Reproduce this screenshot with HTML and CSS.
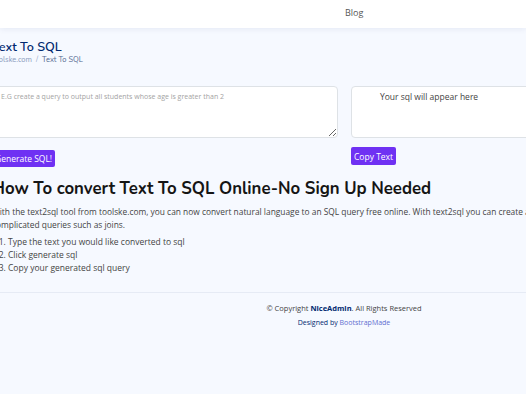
FILE: index.html
```html
<!DOCTYPE html>
<html lang="en">
<head>
<meta charset="utf-8">
<title>Text To SQL</title>
<link rel="stylesheet" href="styles.css">
</head>
<body>
<header class="header">
  <nav class="nav"><a class="nav-link" href="#">Blog</a></nav>
</header>
<main class="main">
  <div class="pagetitle">
    <h1>Text To SQL</h1>
    <div class="breadcrumb"><a href="#">toolske.com</a><span class="sep">/</span><span class="current">Text To SQL</span></div>
  </div>
  <section class="tool">
    <div class="col">
      <textarea class="box" placeholder="E.G create a query to output all students whose age is greater than 2"></textarea>
      <button class="btn btn-gen">Generate SQL!</button>
    </div>
    <div class="col">
      <div class="box output">Your sql will appear here</div>
      <button class="btn btn-copy">Copy Text</button>
    </div>
  </section>
  <section class="about">
    <h2>How To convert Text To SQL Online-No Sign Up Needed</h2>
    <p>With the text2sql tool from toolske.com, you can now convert natural language to an SQL query free online. With text2sql you can create any complicated queries such as joins.</p>
    <ol>
      <li>Type the text you would like converted to sql</li>
      <li>Click generate sql</li>
      <li>Copy your generated sql query</li>
    </ol>
  </section>
</main>
<footer class="footer">
  <div class="copyright">&copy; Copyright <strong>NiceAdmin</strong>. All Rights Reserved</div>
  <div class="credits">Designed by <a href="#">BootstrapMade</a></div>
</footer>
</body>
</html>
```
FILE: styles.css
```css
html, body {
  margin: 0;
  padding: 0;
  overflow: hidden;
}
body {
  background: #f6f9ff;
  font-family: "Open Sans", "Liberation Sans", sans-serif;
  color: #444444;
  width: 526px;
  height: 394px;
}
.header {
  box-sizing: border-box;
  height: 28px;
  background: #fff;
  box-shadow: 0 1px 6px rgba(1, 41, 112, 0.08);
  display: flex;
  align-items: flex-start;
  padding-top: 6px;
}
.nav {
  padding-left: 345px;
  font-size: 9px;
  line-height: 13px;
}
.nav-link {
  color: #555;
  text-decoration: none;
}
.main {
  margin-left: -8px;
  width: 705px;
  padding-top: 10px;
}
.pagetitle h1 {
  margin: 0;
  font-family: "Nunito", "Lato", sans-serif;
  font-weight: 600;
  font-size: 12.6px;
  line-height: 17px;
  color: #012970;
}
.breadcrumb {
  font-size: 7.5px;
  line-height: 10px;
  margin-top: 0;
  font-family: "Nunito", "Lato", sans-serif;
}
.breadcrumb a {
  color: #899bbd;
  text-decoration: none;
}
.breadcrumb .sep {
  color: #899bbd;
  padding: 0 4px;
}
.breadcrumb .current {
  color: #51678f;
}
.tool {
  margin-top: 21px;
  display: grid;
  grid-template-columns: 1fr 1fr;
  column-gap: 13px;
}
.col {
  display: flex;
  flex-direction: column;
  align-items: flex-start;
}
.box {
  box-sizing: border-box;
  width: 100%;
  height: 52px;
  background: #fff;
  border: 1px solid #dee2e6;
  border-radius: 4px;
  margin: 0;
}
textarea.box {
  font-family: "Open Sans", sans-serif;
  font-size: 7px;
  padding: 5px 8px;
  color: #444;
  resize: vertical;
}
textarea.box::placeholder {
  color: #a3a3a3;
}
.output {
  font-size: 8.5px;
  padding: 4px 0 0 28px;
  color: #444;
}
.btn {
  border: none;
  border-radius: 2px;
  background: #6f31f3;
  color: #fff;
  font-family: "Open Sans", sans-serif;
  font-size: 8.5px;
  padding: 0 3px;
  height: 17px;
}
.btn-gen {
  margin-top: 12px;
}
.btn-copy {
  margin-top: 9px;
  height: 18px;
}
.about {
  margin-top: 11px;
}
.about h2 {
  margin: 0;
  font-family: "Nunito", "Lato", sans-serif;
  font-weight: 700;
  font-size: 16.8px;
  line-height: 22px;
  color: #151515;
}
.about p {
  margin: 5px 0 0;
  font-size: 8.4px;
  line-height: 13px;
  width: 560px;
}
.about ol {
  margin: 4px 0 0;
  padding-left: 16px;
  font-size: 8.5px;
  line-height: 13px;
}
.footer {
  margin-top: 18px;
  border-top: 1px solid #e6ebf5;
  padding: 9px 0 0 162px;
  text-align: center;
  font-size: 7.5px;
  color: #444;
}
.copyright {
  line-height: 13px;
}
.copyright strong {
  color: #012970;
}
.credits {
  line-height: 13px;
  margin-top: 1px;
  font-size: 7px;
  color: #012970;
}
.credits a {
  color: #5f6fd0;
  text-decoration: none;
}
```
